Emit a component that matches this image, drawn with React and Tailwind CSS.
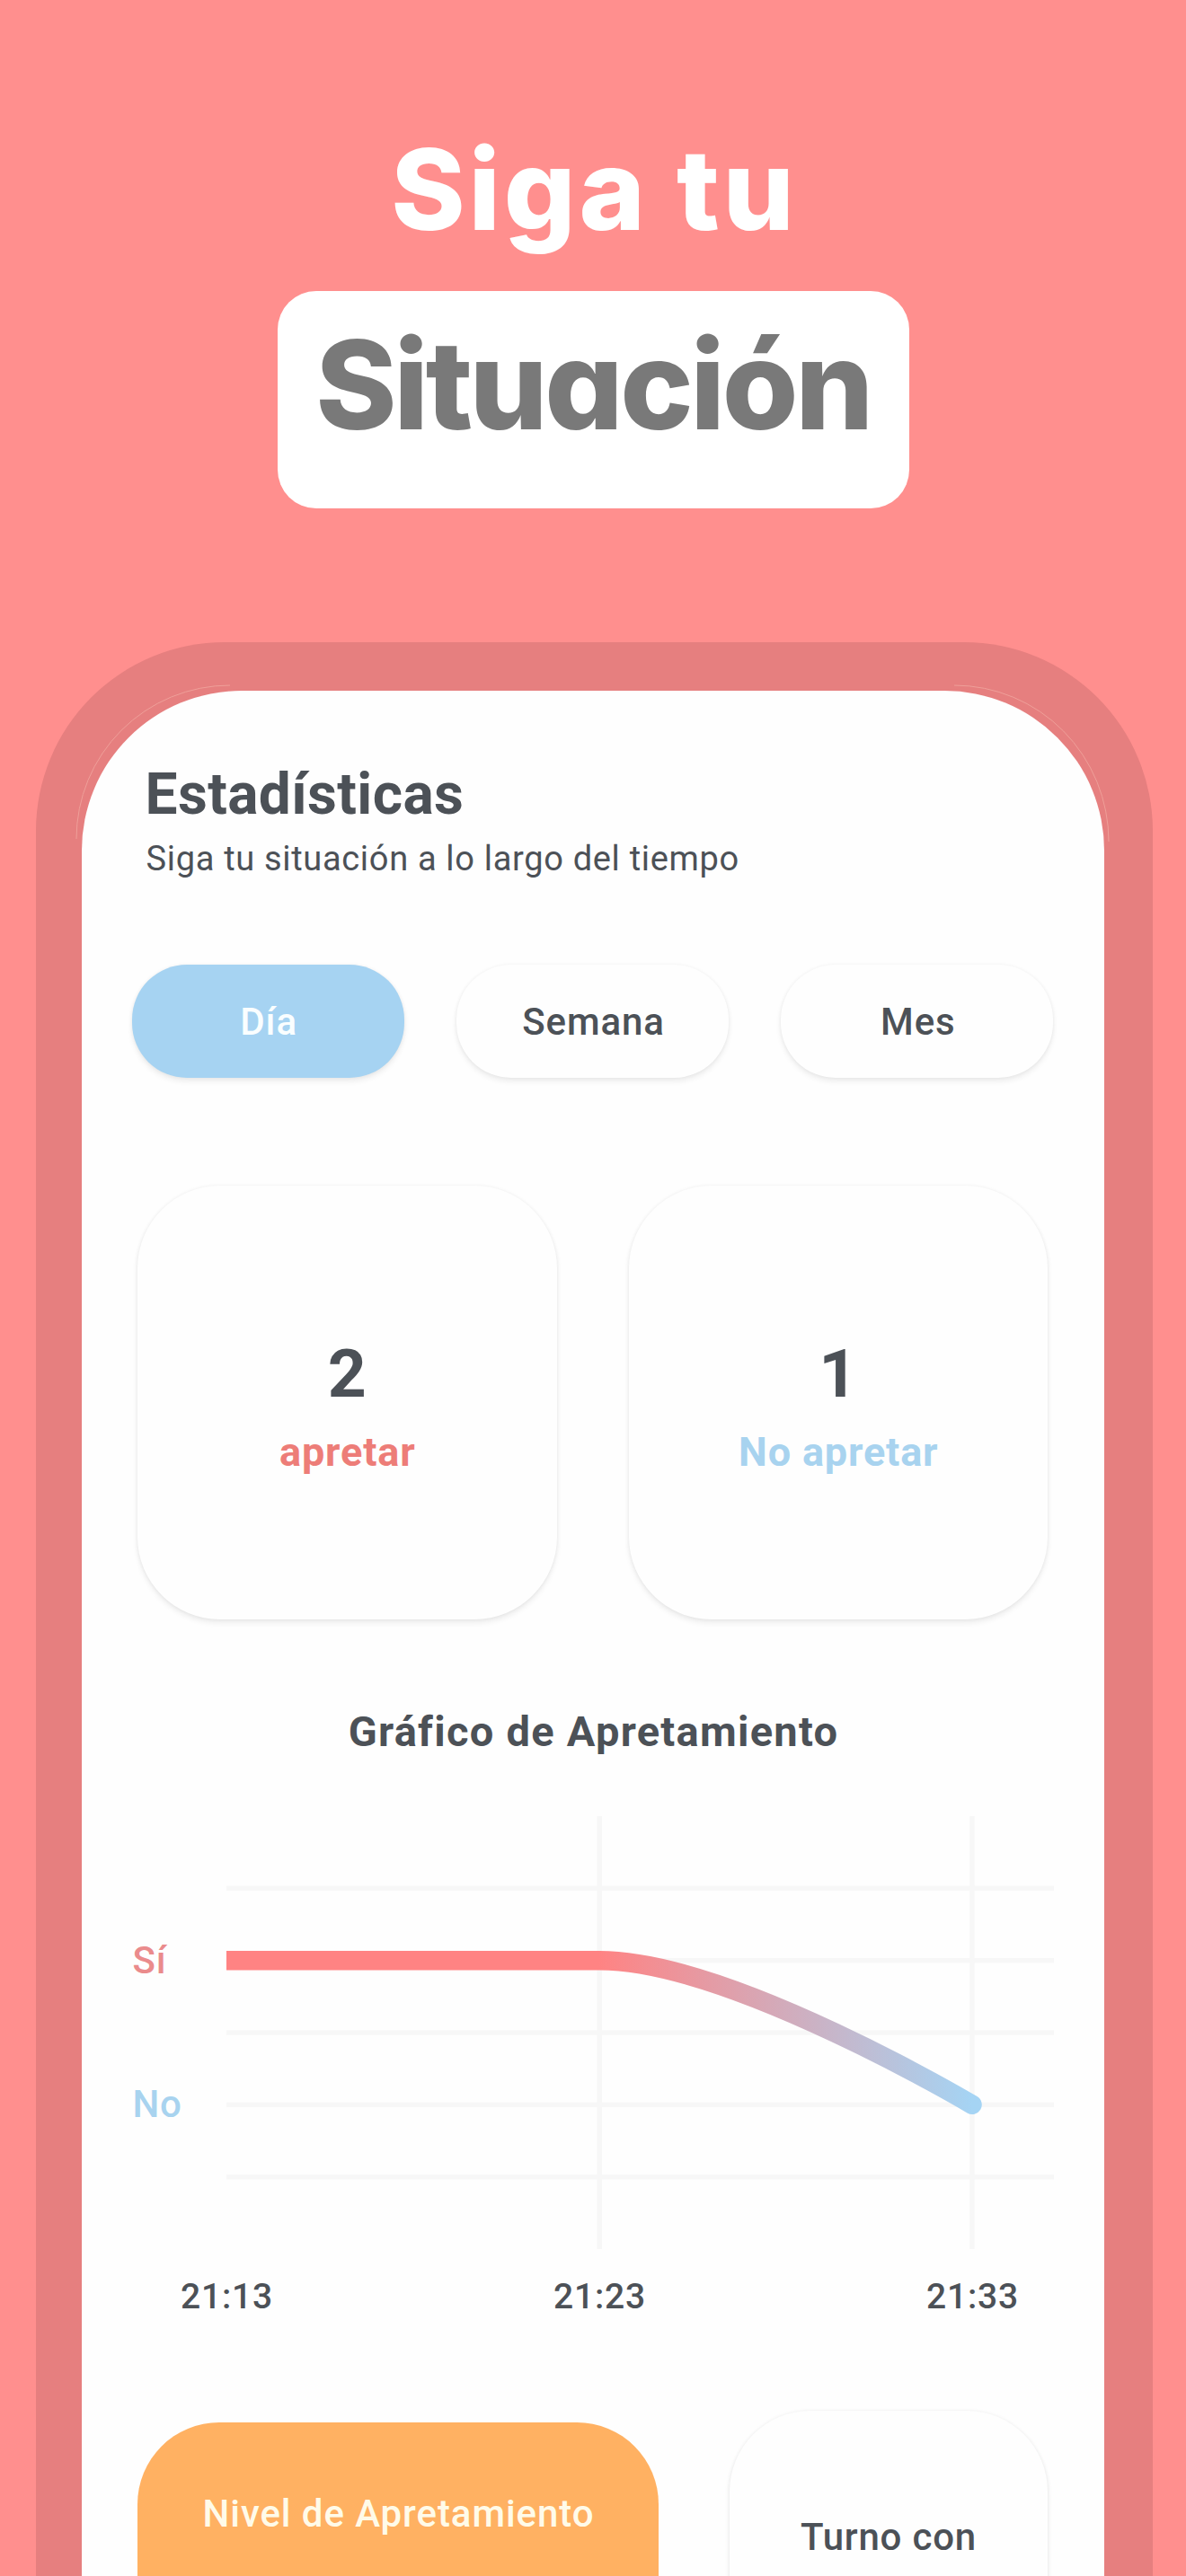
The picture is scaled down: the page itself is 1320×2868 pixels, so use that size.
import { useState } from "react";
import clsx from "clsx";

const periods = ["Día", "Semana", "Mes"];

const counters = [
  { value: 2, label: "apretar", color: "text-[#ed7d78]" },
  { value: 1, label: "No apretar", color: "text-[#a8d3ef]" },
];

const times = ["21:13", "21:23", "21:33"];

function Headline() {
  return (
    <header className="flex flex-col items-center pt-[151px]">
      <h1 className="pl-[3px] font-['Inter',sans-serif] text-[125px] leading-[120px] font-extrabold tracking-[3.8px] text-white">
        Siga tu
      </h1>
      <div className="mt-[53px] h-[242px] w-[703px] rounded-[43px] bg-white pt-[34px] text-center">
        <span className="font-['Inter',sans-serif] text-[137px] leading-[140px] font-extrabold tracking-[-3.4px] text-[#797979] [font-feature-settings:'cv11']">
          Situación
        </span>
      </div>
    </header>
  );
}

function PeriodTabs({ active, onChange }) {
  return (
    <div className="mt-[94px] flex gap-[58px] px-[56px]">
      {periods.map((period) => (
        <button
          key={period}
          onClick={() => onChange(period)}
          className={clsx(
            "h-[126px] flex-1 rounded-[61px] pl-[2px] text-[42px] font-medium tracking-[0.9px] shadow-[0_4px_6px_rgba(0,0,0,0.07),0_0_4px_rgba(0,0,0,0.05)]",
            period === active ? "bg-[#a6d3f2] text-[#fafeff]" : "bg-[#fefefe]"
          )}
        >
          {period}
        </button>
      ))}
    </div>
  );
}

function CounterCard({ value, label, color }) {
  return (
    <div className="flex h-[483px] flex-1 flex-col items-center rounded-[92px] bg-[#fefefe] pt-[173px] font-bold shadow-[0_4px_6px_rgba(0,0,0,0.07),0_0_4px_rgba(0,0,0,0.06)]">
      <span className="text-[75px] leading-[72px]">{value}</span>
      <span className={clsx("mt-[26px] pl-px text-[45px] leading-[52px] tracking-[0.85px]", color)}>
        {label}
      </span>
    </div>
  );
}

function ClenchChart() {
  return (
    <section className="mt-[97px]">
      <h3 className="pl-[2px] text-center text-[47px] leading-[56px] font-bold tracking-[1.28px]">
        Gráfico de Apretamiento
      </h3>
      <div className="mt-[66px] flex pl-[56px]">
        <div className="flex w-[105px] flex-col gap-[120px] pt-[141px] pl-px text-[42px] leading-[40px] font-medium tracking-[0.8px]">
          <span className="text-[#ea8b8c]">Sí</span>
          <span className="text-[#a8d3ef]">No</span>
        </div>
        <svg width="921" height="482" viewBox="0 0 921 482" fill="none">
          <defs>
            <linearGradient id="level" gradientUnits="userSpaceOnUse" x1="0" y1="0" x2="830" y2="0">
              <stop offset="0" stopColor="#ff8383" />
              <stop offset="0.5" stopColor="#ff8383" />
              <stop offset="1" stopColor="#a5d4f4" />
            </linearGradient>
            <clipPath id="plot">
              <rect width="921" height="482" />
            </clipPath>
          </defs>
          <g stroke="#f7f7f7" strokeWidth="5.5">
            <path d="M0 80.3H921M0 160.7H921M0 241H921M0 321.3H921M0 401.7H921" />
            <path d="M415.3 0V482M830 0V482" />
          </g>
          <path
            d="M0 160.7H415.3C560.5 160.7 830 321.3 830 321.3"
            stroke="url(#level)"
            strokeWidth="21.5"
            strokeLinecap="round"
            clipPath="url(#plot)"
          />
        </svg>
      </div>
      <div className="mt-[33px] flex w-[1052px] justify-between pl-[102px] text-center text-[39px] leading-[40px] font-medium tracking-[0.8px]">
        {times.map((time) => (
          <span key={time} className="w-[120px]">
            {time}
          </span>
        ))}
      </div>
    </section>
  );
}

export default function App() {
  const [period, setPeriod] = useState("Día");

  return (
    <div className="h-[2868px] w-[1320px] overflow-hidden bg-[#ff8f8e]">
      <Headline />

      <div className="relative mt-[149px] ml-[40px] h-[2300px] w-[1242.5px] rounded-t-[210px] bg-[#e67f7f] pt-[54px] pl-[50.5px]">
        {/* hairline highlight on the bezel corners */}
        <svg className="absolute top-[47px] left-[44px]" width="1152" height="182" fill="none">
          <path
            d="M1 172A171 171 0 0 1 172 1M978 1A172 174 0 0 1 1150 175"
            stroke="#ef9f99"
            strokeWidth="1"
          />
        </svg>

        <main className="h-[2200px] w-[1138px] rounded-t-[178px] bg-[#fefefe] pt-[80px] font-['Roboto',sans-serif] text-[#4c5157]">
          <h2 className="pl-[71px] text-[64px] leading-[72px] font-bold tracking-[0.38px]">
            Estadísticas
          </h2>
          <p className="mt-[11px] pl-[72px] text-[38px] leading-[48px] tracking-[0.68px]">
            Siga tu situación a lo largo del tiempo
          </p>

          <PeriodTabs active={period} onChange={setPeriod} />

          <div className="mt-[120px] flex gap-[80px] px-[62.5px]">
            {counters.map((counter) => (
              <CounterCard key={counter.label} {...counter} />
            ))}
          </div>

          <ClenchChart />

          <div className="mt-[107px] flex items-start px-[62.5px] text-center text-[42px] leading-[50px] font-medium">
            <div className="mt-[13px] h-[300px] w-[580px] rounded-[91px] bg-[#ffb162] pt-[77px] pl-px tracking-[0.92px] text-[#fffbe9]">
              Nivel de Apretamiento
            </div>
            <div className="ml-[79px] h-[314px] flex-1 rounded-[90px] bg-[#fefefe] pt-[116px] tracking-[0.78px] shadow-[0_4px_6px_rgba(0,0,0,0.07),0_0_4px_rgba(0,0,0,0.06)]">
              Turno con
            </div>
          </div>
        </main>
      </div>
    </div>
  );
}
